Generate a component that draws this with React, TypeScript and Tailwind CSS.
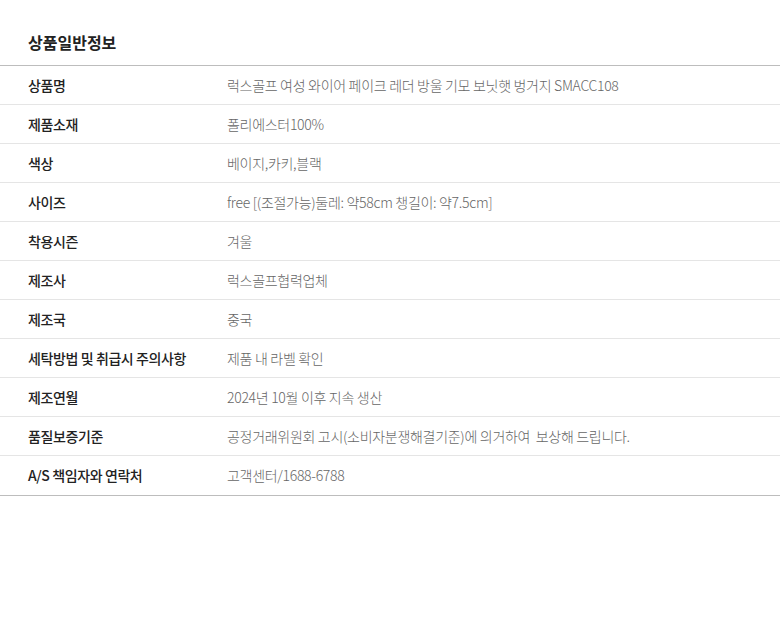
import React from "react";

const rows: [string, string][] = [
  ["상품명", "럭스골프 여성 와이어 페이크 레더 방울 기모 보닛햇 벙거지 SMACC108"],
  ["제품소재", "폴리에스터100%"],
  ["색상", "베이지,카키,블랙"],
  ["사이즈", "free [(조절가능)둘레: 약58cm 챙길이: 약7.5cm]"],
  ["착용시즌", "겨울"],
  ["제조사", "럭스골프협력업체"],
  ["제조국", "중국"],
  ["세탁방법 및 취급시 주의사항", "제품 내 라벨 확인"],
  ["제조연월", "2024년 10월 이후 지속 생산"],
  ["품질보증기준", "공정거래위원회 고시(소비자분쟁해결기준)에 의거하여  보상해 드립니다."],
  ["A/S 책임자와 연락처", "고객센터/1688-6788"],
];

export default function App() {
  return (
    <div
      className="w-[780px] h-[631px] bg-white"
      style={{ fontFamily: '"Noto Sans CJK KR", "Noto Sans", sans-serif' }}
    >
      <h2 className="pt-[31px] pl-7 pb-[11px] text-[16px] leading-[23px] font-bold text-[#222]">
        상품일반정보
      </h2>
      <div className="border-t border-b border-[#bdbdbd]">
        {rows.map(([label, value], i) => (
          <div
            key={label}
            className={`flex items-center h-[39px] ${i < rows.length - 1 ? "border-b border-[#e5e5e5]" : ""}`}
          >
            <div className="w-[227px] shrink-0 pl-7 text-[14px] font-medium text-[#222] tracking-[-0.4px] whitespace-pre">
              {label}
            </div>
            <div className="text-[14px] font-light text-[#666] tracking-[-0.3px] whitespace-pre">{value}</div>
          </div>
        ))}
      </div>
    </div>
  );
}
